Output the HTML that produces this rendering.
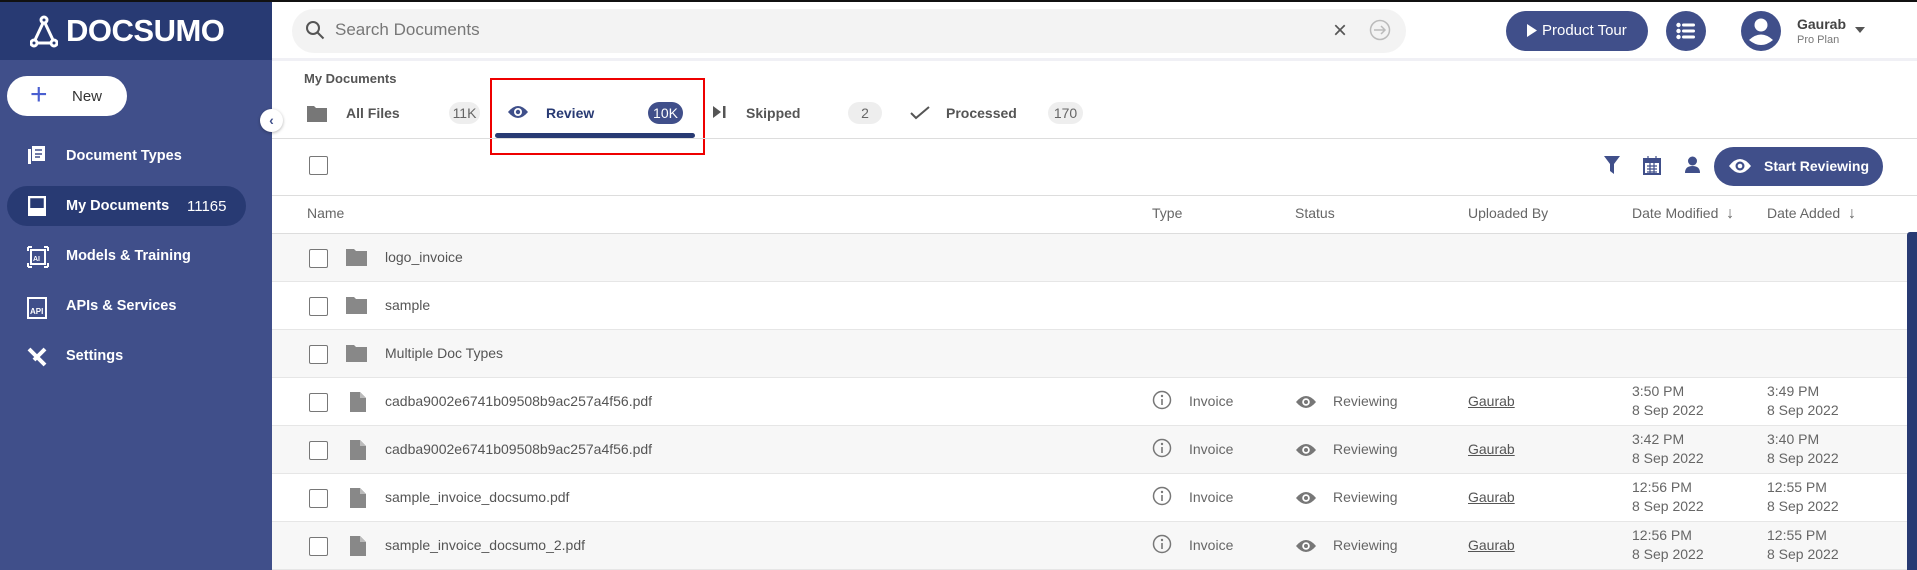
<!DOCTYPE html>
<html><head><style>
*{box-sizing:border-box;margin:0;padding:0}
body{width:1917px;height:570px;overflow:hidden;background:#fff;font-family:"Liberation Sans",sans-serif;position:relative;color:#555}
.a{position:absolute}
.sb{left:0;top:0;width:272px;height:570px;background:#404f8a}
.logo{left:0;top:0;width:272px;height:60px;background:#283a73;border-top:2px solid #111}
.mi{position:absolute;left:66px;color:#fff;font-size:14.5px;font-weight:bold}
.row{position:absolute;left:272px;width:1635px;height:48px;border-bottom:1px solid #e6e6e6}
.g{background:#f7f7f7}
.cb{position:absolute;width:19px;height:19px;border:1.5px solid #777;border-radius:2px;background:#fff}
.t{position:absolute;font-size:14px;color:#555}
.h{position:absolute;font-size:14px;color:#666;top:205px}
.badge{position:absolute;height:22px;border-radius:11px;background:#eee;color:#666;font-size:14px;text-align:center;line-height:22px;top:102px}
</style></head><body>
<div class="a" style="left:0;top:0;width:1917px;height:2px;background:#111"></div>
<div class="a sb"></div>
<div class="a logo">
<svg class="a" style="left:30px;top:13px" width="28" height="34" viewBox="0 0 28 34"><g fill="none" stroke="#fff" stroke-width="3"><circle cx="14" cy="5" r="3"/><circle cx="4" cy="28" r="3"/><circle cx="24" cy="28" r="3"/><path d="M13 8L5 25M15 8L23 25M7 28H21"/></g></svg>
<div class="a" style="left:66px;top:11px;color:#fff;font-size:31px;font-weight:bold;letter-spacing:-0.5px">DOCSUMO</div>
</div>
<div class="a" style="left:7px;top:76px;width:120px;height:40px;border-radius:20px;background:#fff"></div>
<div class="a" style="left:30px;top:80px;color:#4a5fd0;font-size:30px;line-height:30px">+</div>
<div class="a" style="left:72px;top:88px;font-size:15px;color:#333">New</div>
<div class="a" style="left:260px;top:109px;width:23px;height:23px;border-radius:50%;background:#fff;box-shadow:0 1px 3px rgba(0,0,0,.3);color:#3f4f8a;font-size:14px;text-align:center;line-height:22px;font-weight:bold">‹</div>
<div class="a" style="left:7px;top:186px;width:239px;height:40px;border-radius:20px;background:#283a73"></div>
<svg class="a" style="left:27px;top:145px" width="20" height="20"><rect x="5" y="1" width="13" height="15" fill="#fff"/><rect x="1" y="4" width="3" height="15" fill="#fff"/><path d="M8 5h7M8 9h7M8 12h5" stroke="#404f8a" stroke-width="1.5"/></svg>
<div class="mi" style="top:148px">Document Types</div>
<svg class="a" style="left:28px;top:196px" width="18" height="20"><rect x="1" y="1" width="16" height="18" fill="none" stroke="#fff" stroke-width="2.5"/><rect x="1" y="12" width="16" height="7" fill="#fff"/></svg>
<div class="mi" style="top:198px">My Documents</div>
<div class="a" style="left:187px;top:198px;color:#fff;font-size:15px">11165</div>
<svg class="a" style="left:27px;top:246px" width="22" height="22"><rect x="4" y="4" width="14" height="14" fill="none" stroke="#fff" stroke-width="2"/><path d="M1 1h4M17 1h4M1 21h4M17 21h4M1 1v4M21 1v4M1 21v-4M21 21v-4" stroke="#fff" stroke-width="2"/><text x="6" y="15" font-size="7" fill="#fff" font-weight="bold">AI</text></svg>
<div class="mi" style="top:248px">Models &amp; Training</div>
<svg class="a" style="left:27px;top:297px" width="20" height="22"><rect x="1" y="1" width="18" height="20" fill="none" stroke="#fff" stroke-width="2"/><text x="3" y="17" font-size="8" fill="#fff" font-weight="bold">API</text></svg>
<div class="mi" style="top:298px">APIs &amp; Services</div>
<svg class="a" style="left:26px;top:346px" width="22" height="22"><path d="M3 3l16 16M19 3L8 14" stroke="#fff" stroke-width="4"/></svg>
<div class="mi" style="top:348px">Settings</div>

<div class="a" style="left:272px;top:58px;width:1645px;height:3px;background:#f0f0f5"></div>
<div class="a" style="left:292px;top:9px;width:1114px;height:44px;border-radius:22px;background:#f3f3f3"></div>
<svg class="a" style="left:305px;top:20px" width="20" height="20"><circle cx="8" cy="8" r="6" fill="none" stroke="#555" stroke-width="2"/><path d="M12.5 12.5l6 6" stroke="#555" stroke-width="2"/></svg>
<div class="a" style="left:335px;top:20px;font-size:17px;color:#777">Search Documents</div>
<div class="a" style="left:1333px;top:17px;font-size:24px;color:#555">×</div>
<svg class="a" style="left:1369px;top:19px" width="22" height="22"><circle cx="11" cy="11" r="9.5" fill="none" stroke="#bbb" stroke-width="1.5"/><path d="M5 11h11M12 7l4 4-4 4" stroke="#bbb" stroke-width="1.5" fill="none"/></svg>
<div class="a" style="left:1506px;top:11px;width:142px;height:40px;border-radius:20px;background:#404f8a;color:#fff;font-size:15px;line-height:40px;padding-left:36px">Product Tour</div>
<svg class="a" style="left:1527px;top:24px" width="10" height="13"><path d="M0 0L10 6.5 0 13z" fill="#fff"/></svg>
<div class="a" style="left:1666px;top:11px;width:40px;height:40px;border-radius:50%;background:#404f8a"></div>
<svg class="a" style="left:1676px;top:22px" width="20" height="18" fill="#fff"><circle cx="2.5" cy="3" r="2.2"/><circle cx="2.5" cy="9" r="2.2"/><circle cx="2.5" cy="15" r="2.2"/><rect x="6" y="1.5" width="13" height="3" rx="1.5"/><rect x="6" y="7.5" width="13" height="3" rx="1.5"/><rect x="6" y="13.5" width="13" height="3" rx="1.5"/></svg>
<svg class="a" style="left:1741px;top:11px" width="40" height="40"><circle cx="20" cy="20" r="20" fill="#404f8a"/><circle cx="20" cy="14" r="6.5" fill="#fff"/><path d="M8 29q12-11 24 0q-12 10-24 0z" fill="#fff"/></svg>
<div class="a" style="left:1797px;top:16px;font-size:14px;font-weight:bold;color:#444">Gaurab</div>
<div class="a" style="left:1797px;top:34px;font-size:11px;color:#777">Pro Plan</div>
<div class="a" style="left:1855px;top:27px;border:5px solid transparent;border-top:6px solid #555"></div>

<div class="a" style="left:304px;top:71px;font-size:13px;color:#555;font-weight:bold">My Documents</div>
<svg class="a" style="left:307px;top:104px" width="20" height="18"><path d="M0 2h7l2 2h11v14H0z" fill="#777"/></svg>
<div class="a" style="left:346px;top:105px;font-size:14px;font-weight:bold;color:#555">All Files</div>
<div class="badge" style="left:449px;width:31px">11K</div>
<div class="a" style="left:490px;top:78px;width:215px;height:77px;border:2px solid #e00"></div>
<svg class="a" style="left:508px;top:105px" width="20" height="14"><path d="M0 7q10-12 20 0q-10 12-20 0z" fill="#3f4f8a"/><circle cx="10" cy="7" r="4" fill="#fff"/><circle cx="10" cy="7" r="2.2" fill="#3f4f8a"/></svg>
<div class="a" style="left:546px;top:105px;font-size:14px;font-weight:bold;color:#283a73">Review</div>
<div class="badge" style="left:648px;width:35px;background:#404f8a;color:#fff">10K</div>
<div class="a" style="left:495px;top:133px;width:200px;height:5px;border-radius:3px;background:#283a73"></div>
<svg class="a" style="left:713px;top:106px" width="14" height="12"><path d="M0 0L8 6 0 12z" fill="#555"/><rect x="10" y="0" width="2.5" height="12" fill="#555"/></svg>
<div class="a" style="left:746px;top:105px;font-size:14px;font-weight:bold;color:#555">Skipped</div>
<div class="badge" style="left:848px;width:34px">2</div>
<svg class="a" style="left:910px;top:106px" width="20" height="14"><path d="M1 7l5 5L19 1" stroke="#555" stroke-width="2" fill="none"/></svg>
<div class="a" style="left:946px;top:105px;font-size:14px;font-weight:bold;color:#555">Processed</div>
<div class="badge" style="left:1048px;width:35px">170</div>
<div class="a" style="left:272px;top:138px;width:1645px;height:1px;background:#ddd"></div>

<div class="cb" style="left:309px;top:156px"></div>
<svg class="a" style="left:1604px;top:156px" width="16" height="18"><path d="M0 0h16L10 8v10l-4-3V8z" fill="#404f8a"/></svg>
<svg class="a" style="left:1643px;top:156px" width="18" height="19"><rect x="1" y="3" width="16" height="15" fill="none" stroke="#404f8a" stroke-width="2"/><rect x="1" y="3" width="16" height="4" fill="#404f8a"/><path d="M5 0v4M13 0v4M4 10h10M4 13h10M4 16h10M7 7v11M11 7v11" stroke="#404f8a" stroke-width="1.2"/></svg>
<svg class="a" style="left:1685px;top:156px" width="15" height="17"><circle cx="7.5" cy="5" r="4.5" fill="#404f8a"/><path d="M0 17q0-7 7.5-7t7.5 7z" fill="#404f8a"/></svg>
<div class="a" style="left:1714px;top:147px;width:169px;height:39px;border-radius:20px;background:#404f8a;color:#fff;font-size:14px;font-weight:bold;line-height:39px;padding-left:50px">Start Reviewing</div>
<svg class="a" style="left:1729px;top:158px" width="22" height="16"><path d="M0 8q11-14 22 0q-11 14-22 0z" fill="#fff"/><circle cx="11" cy="8" r="4.5" fill="#404f8a"/><circle cx="11" cy="8" r="2.3" fill="#fff"/></svg>
<div class="a" style="left:272px;top:195px;width:1645px;height:1px;background:#ddd"></div>
<div class="h" style="left:307px">Name</div>
<div class="h" style="left:1152px">Type</div>
<div class="h" style="left:1295px">Status</div>
<div class="h" style="left:1468px">Uploaded By</div>
<div class="h" style="left:1632px">Date Modified &nbsp;<span style="font-size:16px">↓</span></div>
<div class="h" style="left:1767px">Date Added &nbsp;<span style="font-size:16px">↓</span></div>
<div class="a" style="left:272px;top:233px;width:1645px;height:1px;background:#ddd"></div>

<div class="row g" style="top:234px"></div>
<div class="row" style="top:282px"></div>
<div class="row g" style="top:330px"></div>
<div class="row" style="top:378px"></div>
<div class="row g" style="top:426px"></div>
<div class="row" style="top:474px"></div>
<div class="row g" style="top:522px"></div>
<div class="a" style="left:1907px;top:232px;width:10px;height:338px;background:#283a73;border-radius:3px 0 0 0"></div>

<div id="rows"></div>
<script>
var names=["logo_invoice","sample","Multiple Doc Types","cadba9002e6741b09508b9ac257a4f56.pdf","cadba9002e6741b09508b9ac257a4f56.pdf","sample_invoice_docsumo.pdf","sample_invoice_docsumo_2.pdf"];
var dm=["3:50 PM","3:42 PM","12:56 PM","12:56 PM"],da=["3:49 PM","3:40 PM","12:55 PM","12:55 PM"];
var h="";
for(var i=0;i<7;i++){var y=234+i*48;var c=y+24;
h+='<div class="cb" style="left:309px;top:'+(c-9)+'px"></div>';
if(i<3)h+='<svg class="a" style="left:346px;top:'+(c-9)+'px" width="21" height="17"><path d="M0 0h8l2 2h11v15H0z" fill="#888"/></svg>';
else h+='<svg class="a" style="left:350px;top:'+(c-10)+'px" width="16" height="20"><path d="M0 0h10l6 6v14H0z" fill="#888"/><path d="M10 0v6h6" fill="#bbb"/></svg>';
h+='<div class="t" style="left:385px;top:'+(c-9)+'px;font-size:14px">'+names[i]+'</div>';
if(i>=3){var j=i-3;
h+='<svg class="a" style="left:1152px;top:'+(c-12)+'px" width="20" height="20"><circle cx="10" cy="10" r="8.5" fill="none" stroke="#777" stroke-width="1.5"/><circle cx="10" cy="6" r="1.2" fill="#777"/><path d="M10 9v6" stroke="#777" stroke-width="1.6"/></svg>';
h+='<div class="t" style="left:1189px;top:'+(c-9)+'px;color:#666">Invoice</div>';
h+='<svg class="a" style="left:1296px;top:'+(c-7)+'px" width="20" height="14"><path d="M0 7q10-12 20 0q-10 12-20 0z" fill="#777"/><circle cx="10" cy="7" r="3.8" fill="#fff"/><circle cx="10" cy="7" r="2" fill="#777"/></svg>';
h+='<div class="t" style="left:1333px;top:'+(c-9)+'px;color:#666">Reviewing</div>';
h+='<div class="t" style="left:1468px;top:'+(c-9)+'px;color:#555;text-decoration:underline">Gaurab</div>';
h+='<div class="t" style="left:1632px;top:'+(c-20)+'px;line-height:19px;color:#666">'+dm[j]+'<br>8 Sep 2022</div>';
h+='<div class="t" style="left:1767px;top:'+(c-20)+'px;line-height:19px;color:#666">'+da[j]+'<br>8 Sep 2022</div>';}
}
document.getElementById("rows").innerHTML=h;
</script>
</body></html>
